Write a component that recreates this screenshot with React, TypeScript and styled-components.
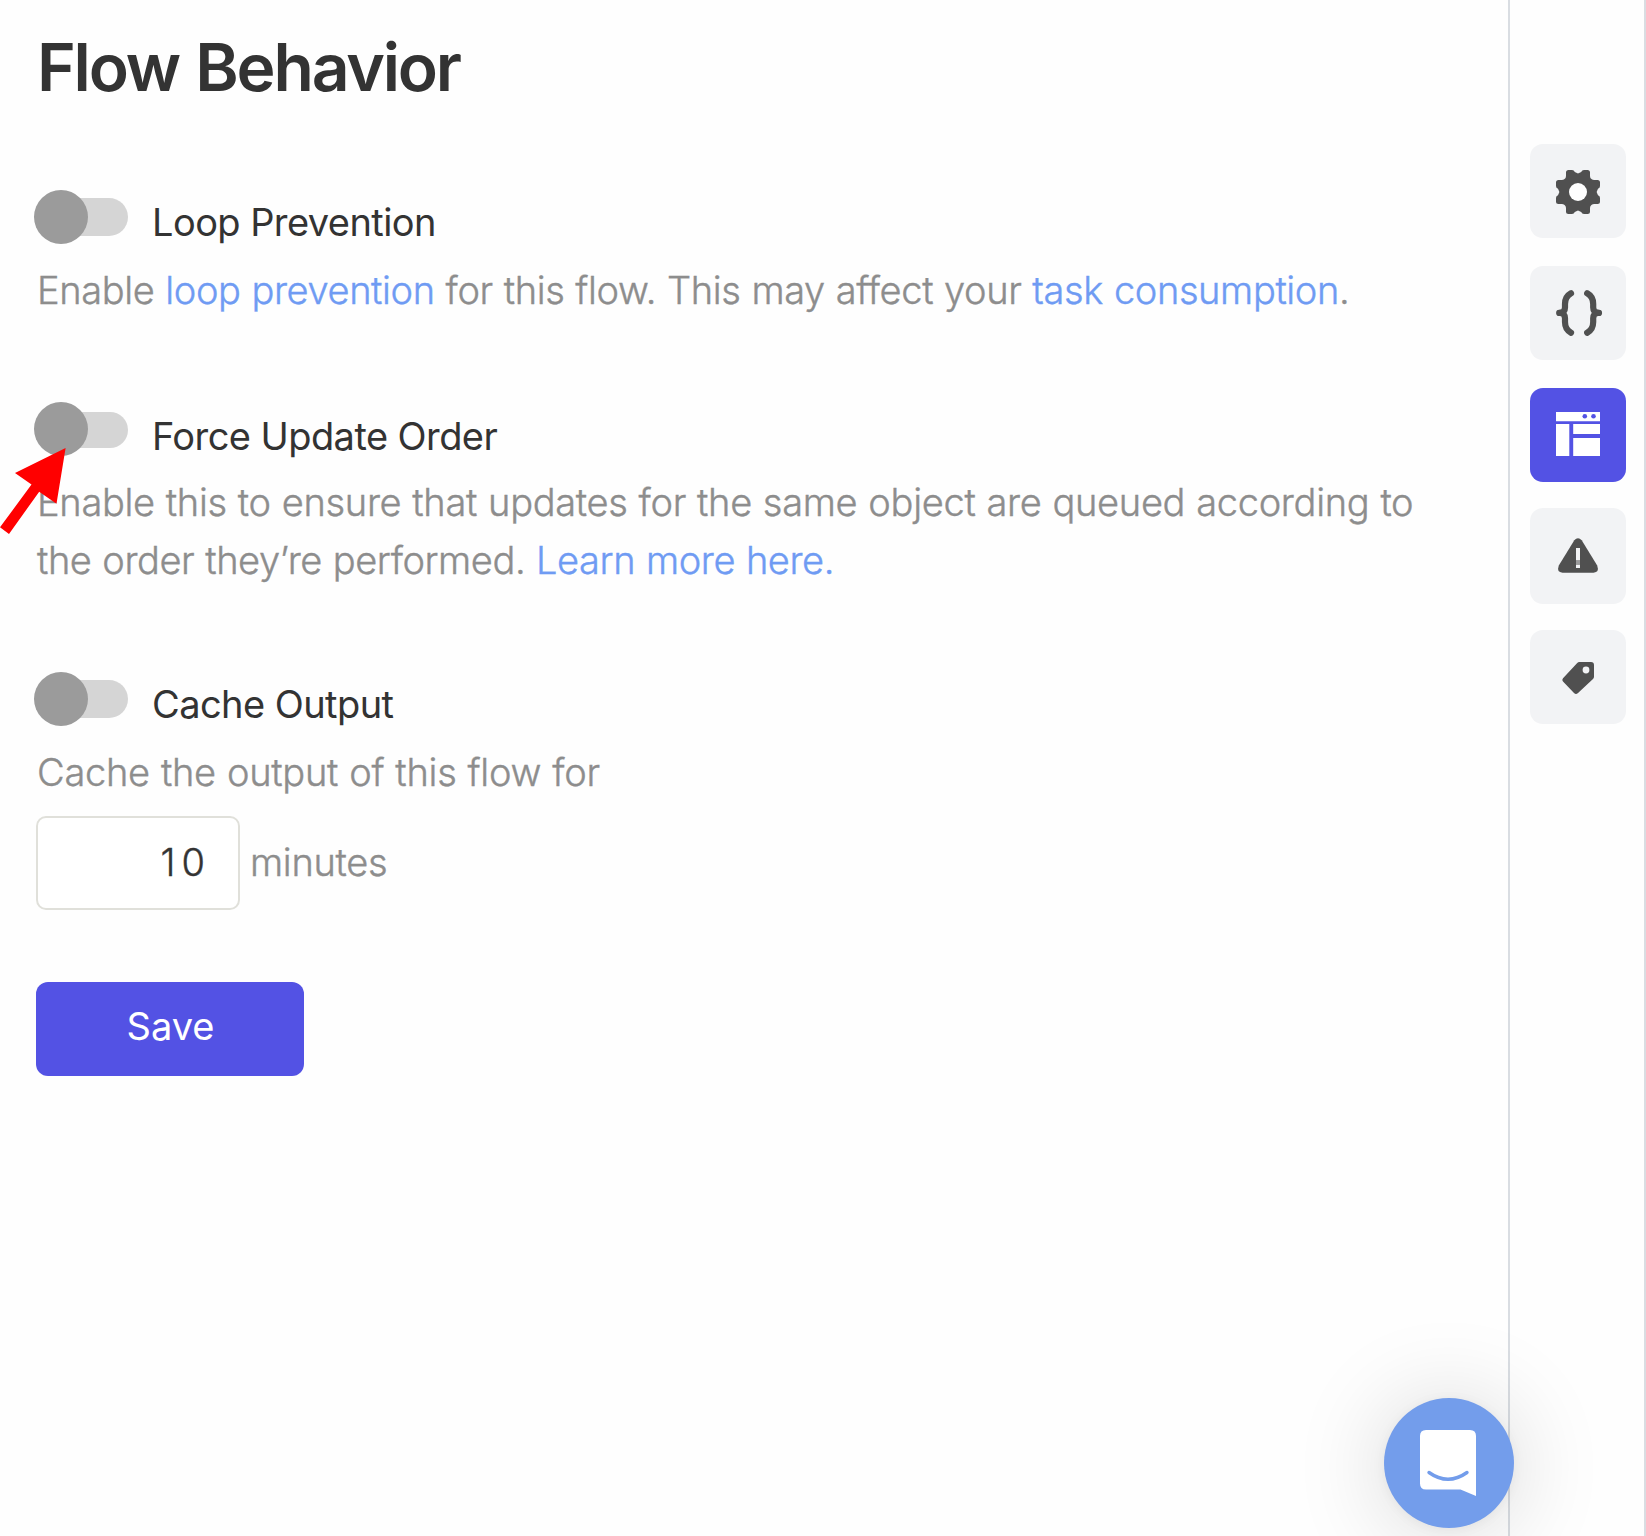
import React, { useState } from 'react';
import styled, { createGlobalStyle } from 'styled-components';

const GlobalStyle = createGlobalStyle`
  *, *::before, *::after { box-sizing: border-box; }
  body {
    margin: 0;
    background: #fefefe;
    color: #333;
    font-family: Inter, 'Liberation Sans', sans-serif;
    font-size: 38px;
    overflow: hidden;
  }
`;

const Page = styled.div`
  position: relative;
  display: flex;
  width: 1646px;
  height: 1536px;
  overflow: hidden;
`;

const Main = styled.main`
  width: 1508px;
  padding: 27px 36px 0;
`;

const Title = styled.h1`
  margin: 0 0 83px;
  padding-left: 1px;
  font-size: 66px;
  font-weight: 600;
  line-height: 80px;
  letter-spacing: -2.2px;
  word-spacing: 2px;
`;

const Setting = styled.section<{ $gap: number }>`
  margin-bottom: ${p => p.$gap}px;
`;

const SettingHead = styled.label<{ $drop: number }>`
  display: flex;
  align-items: flex-start;
  gap: 24px;
  height: 71px;
  line-height: 54px;
  letter-spacing: -0.57px;

  > span:last-child {
    padding-top: ${p => p.$drop}px;
  }
`;

const Track = styled.span<{ $low?: boolean }>`
  display: flex;
  flex: none;
  align-items: flex-start;
  width: 92px;
  height: ${p => (p.$low ? 36 : 38)}px;
  margin-top: ${p => (p.$low ? 10 : 8)}px;
  border-radius: 19px;
  background: #d5d5d5;
`;

const Knob = styled.span<{ $low?: boolean }>`
  flex: none;
  width: 54px;
  height: 54px;
  margin: ${p => (p.$low ? -10 : -8)}px 0 0 -2px;
  border-radius: 50%;
  background: #9b9b9b;
`;

const Description = styled.p<{ $tracking?: number }>`
  margin: 0;
  padding-left: 1px;
  color: #8d8d8d;
  font-weight: 300;
  line-height: 58px;
  letter-spacing: ${p => p.$tracking ?? -0.25}px;
  word-spacing: 0.6px;
  white-space: nowrap;
  -webkit-text-stroke: 0.4px currentColor;
`;

const Link = styled.a`
  color: #6f9bf3;
  text-decoration: none;
`;

const Duration = styled.div`
  display: flex;
  align-items: center;
  gap: 9px;
  margin-top: 15px;
`;

const MinutesInput = styled.input`
  width: 204px;
  height: 94px;
  padding: 0 27px 2px 0;
  border: 2px solid #e0e0da;
  border-radius: 10px;
  background: #fff;
  color: #333;
  font: 300 38px Inter, 'Liberation Sans', sans-serif;
  letter-spacing: 6px;
  text-align: right;
  -webkit-text-stroke: 0.4px currentColor;
`;

const Unit = styled(Description).attrs({ as: 'span' })`
  padding-bottom: 2px;
`;

const SaveButton = styled.button`
  width: 268px;
  height: 94px;
  padding: 0 0 6px 1px;
  border: 0;
  border-radius: 12px;
  background: #5352e4;
  color: #fff;
  font: 400 38px Inter, 'Liberation Sans', sans-serif;
`;

const Rail = styled.nav`
  display: flex;
  flex-direction: column;
  gap: 28px;
  width: 138px;
  padding: 144px 0 0 20px;
  border-left: 2px solid #d9dde2;
  border-right: 2px solid #d9dde2;
`;

const RailButton = styled.button<{ $active?: boolean; $tall?: boolean; $pull?: number }>`
  display: flex;
  align-items: flex-start;
  width: 96px;
  height: ${p => (p.$tall ? 96 : 94)}px;
  margin: ${p => p.$pull ?? 0}px 0 0;
  padding: 0;
  border: 0;
  border-radius: 13px;
  background: ${p => (p.$active ? '#5352e4' : '#f2f3f5')};
  color: ${p => (p.$active ? '#fff' : '#505050')};

  svg {
    display: block;
  }
`;

const Pointer = styled.svg`
  position: absolute;
  left: 0;
  top: 440px;
`;

const ChatButton = styled.button`
  position: absolute;
  left: 1384px;
  top: 1398px;
  width: 130px;
  height: 130px;
  padding: 0;
  border: 0;
  border-radius: 50%;
  background: #739deb;
  box-shadow: 0 2px 12px rgba(0, 0, 0, 0.05), 0 4px 92px 3px rgba(0, 0, 0, 0.15);
`;

const gearLeft =
  'L-3.2 -20Q-4 -22 -6 -22H-9.5Q-12 -22 -12 -19.5L-12 -16Q-12.2 -13.6 -13.2 -13.2' +
  'Q-13.6 -12.2 -16 -12L-19.5 -12Q-22 -12 -22 -9.5V-6Q-22 -4 -20 -3.2L-18.6 0' +
  'L-20 3.2Q-22 4 -22 6V9.5Q-22 12 -19.5 12L-16 12Q-13.6 12.2 -13.2 13.2' +
  'Q-12.2 13.6 -12 16L-12 19.5Q-12 22 -9.5 22H-6Q-4 22 -3.2 20L0 18.6';
const gearRight =
  'L3.2 20Q4 22 6 22H9.5Q12 22 12 19.5L12 16Q12.2 13.6 13.2 13.2' +
  'Q13.6 12.2 16 12L19.5 12Q22 12 22 9.5V6Q22 4 20 3.2L18.6 0' +
  'L20 -3.2Q22 -4 22 -6V-9.5Q22 -12 19.5 -12L16 -12Q13.6 -12.2 13.2 -13.2' +
  'Q12.2 -13.6 12 -16L12 -19.5Q12 -22 9.5 -22H6Q4 -22 3.2 -20Z';

const GearIcon = () => (
  <svg width="96" height="94" viewBox="-48 -48 96 94" fill="currentColor">
    <path d={`M0 -18.6${gearLeft}${gearRight}`} />
    <circle r="9" fill="#fefefe" />
  </svg>
);

const BracesIcon = () => (
  <svg width="96" height="94" viewBox="0 0 96 94" fill="none" stroke="currentColor" strokeWidth="6.2" strokeLinejoin="round" strokeLinecap="round">
    <path d="M41 27.3C37 29.5 35 33.5 35 38V41.5C35 44.8 33.4 46.9 30 46.9C33.4 46.9 35 49 35 52.3V56C35 60.5 37 64.5 41 66.7" />
    <path d="M57.2 27.3C61.2 29.5 63.2 33.5 63.2 38V41.5C63.2 44.8 64.8 46.9 68.2 46.9C64.8 46.9 63.2 49 63.2 52.3V56C63.2 60.5 61.2 64.5 57.2 66.7" />
    <path d="M29.2 46.9H33M65.2 46.9H69" />
  </svg>
);

const LayoutIcon = () => (
  <svg width="96" height="94" viewBox="0 0 96 94" fill="currentColor">
    <path d="M26 24H70V33.2H26ZM26 36H39.3V68H26ZM43.2 36H70V46H43.2ZM43.2 50H70V68H43.2Z" />
    <circle cx="54.8" cy="28.3" r="2.3" fill="#5352e4" />
    <circle cx="63.5" cy="28.3" r="2.3" fill="#5352e4" />
  </svg>
);

const WarningIcon = () => (
  <svg width="96" height="96" viewBox="0 0 96 96" fill="currentColor">
    <path d="M44.3 32.2Q48 28.2 51.7 32.2L67.2 57.6Q69.6 64.6 63.5 64.7H32.5Q26.4 64.6 28.8 57.6Z" />
    <path d="M46 40H50V52.5H46ZM46 56.5H50V60H46Z" fill="#f2f3f5" />
    <path d="M46 52.5H50V56.5H46Z" fill="#9a9a9b" />
  </svg>
);

const TagIcon = () => (
  <svg width="96" height="94" viewBox="0 0 96 94" fill="currentColor">
    <path d="M49.5 32H61Q64 32 64 35V46.5Q64 48 63 49L48 63Q46 65 44 63L33 51.5Q31.5 50 33 48.2L47 33.2Q48 32 49.5 32Z" />
    <circle cx="56" cy="40" r="3.4" fill="#f2f3f5" />
  </svg>
);

const ChatIcon = () => (
  <svg width="130" height="130" viewBox="0 0 130 130">
    <path d="M42 32H86Q92 32 92 38V98L76.5 91.4H42Q36 91.4 36 85.4V38Q36 32 42 32Z" fill="#fff" />
    <path d="M45 74.5Q64 88 83 74.5" fill="none" stroke="#739deb" strokeWidth="3.4" strokeLinecap="round" />
  </svg>
);

function Toggle({ label, drop, low }: { label: string; drop: number; low?: boolean }) {
  return (
    <SettingHead $drop={drop}>
      <Track $low={low}>
        <Knob $low={low} />
      </Track>
      <span>{label}</span>
    </SettingHead>
  );
}

export default function App() {
  const [minutes, setMinutes] = useState('10');

  return (
    <>
      <GlobalStyle />
      <Page>
        <Main>
          <Title>Flow Behavior</Title>

          <Setting $gap={83}>
            <Toggle label="Loop Prevention" drop={5} />
            <Description $tracking={-0.38}>
              Enable <Link>loop prevention</Link> for this flow. This may affect your{' '}
              <Link>task consumption</Link>.
            </Description>
          </Setting>

          <Setting $gap={83}>
            <Toggle label="Force Update Order" drop={7} low />
            <Description $tracking={-0.3}>
              Enable this to ensure that updates for the same object are queued according to
            </Description>
            <Description $tracking={-0.42}>
              the order they’re performed. <Link>Learn more here.</Link>
            </Description>
          </Setting>

          <Setting $gap={72}>
            <Toggle label="Cache Output" drop={5} />
            <Description $tracking={-0.26}>Cache the output of this flow for</Description>
            <Duration>
              <MinutesInput value={minutes} onChange={e => setMinutes(e.target.value)} />
              <Unit $tracking={-0.3}>minutes</Unit>
            </Duration>
          </Setting>

          <SaveButton>Save</SaveButton>
        </Main>

        <Rail>
          <RailButton><GearIcon /></RailButton>
          <RailButton><BracesIcon /></RailButton>
          <RailButton $active><LayoutIcon /></RailButton>
          <RailButton $tall $pull={-2}><WarningIcon /></RailButton>
          <RailButton $pull={-2}><TagIcon /></RailButton>
        </Rail>

        <Pointer width="70" height="100" viewBox="0 440 70 100">
          <path d="M65.6 448L56.5 503.7L39.2 491.7L9 534L0 527.3L31.5 484.6L15 473Z" fill="#f00" />
        </Pointer>

        <ChatButton><ChatIcon /></ChatButton>
      </Page>
    </>
  );
}
